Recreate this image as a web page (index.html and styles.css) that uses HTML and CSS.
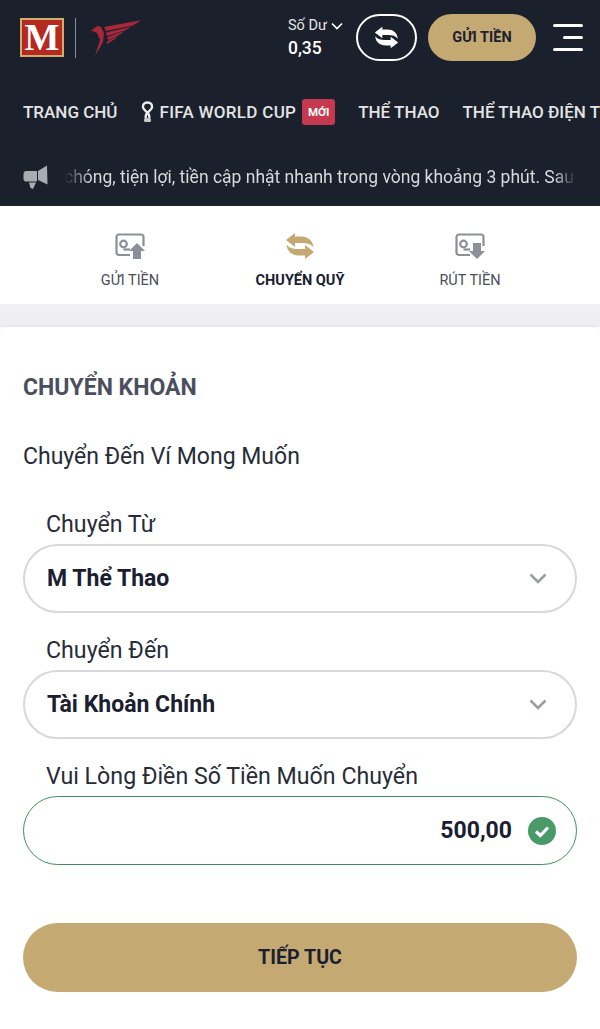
FILE: index.html
```html
<!doctype html>
<html>
<head>
    <meta charset="utf-8">
    <link rel="stylesheet" href="styles.css">
</head>
<body>
<div id="wrapper">
    <header class="header">
        <div class="topbar">
            <div class="logos">
                <div class="logoM"><span>M</span></div>
                <div class="logoLine"></div>
                <svg class="falcon" width="56" height="42" viewBox="0 0 56 42">
                    <path fill="#a8283a" d="M3 13.500 L9.500 9 L13 10 L16 16 L15 25 L7 39 L12 23 L9 16 L6 14.500 Z"/>
                    <path fill="#a8283a" d="M16 10 L53 3.300 L45 8.500 L18 14 Z"/>
                    <path fill="#a8283a" d="M18 15.500 L43 9.800 L38 13 L19 19 Z"/>
                    <path fill="#a8283a" d="M19.500 20 L36 14 L32 17.500 L20 23 Z"/>
                    <path fill="#a8283a" d="M19 24.500 L30 18.500 L27 22 L19 27 Z"/>
                </svg>
            </div>
            <div class="balance">
                <div class="balanceLabel">Số Dư
                    <svg width="12" height="8" viewBox="0 0 12 8"><path d="M1 1.500 L6 6.500 L11 1.500" fill="none" stroke="#fff" stroke-width="1.600"/></svg>
                </div>
                <div class="balanceValue">0,35</div>
            </div>
            <button class="swapBtn">
                <svg width="25" height="23" viewBox="0 0 30 27"><path fill="#fff" d="M1 7.500 L10 0.500 L10 4 L16 4 C23 4 28 8 28.500 15 C26 11.500 22 10.500 17 10.500 L10 10.500 L10 14.500 Z"/><path fill="#fff" transform="rotate(180 15 13.500)" d="M1 7.500 L10 0.500 L10 4 L16 4 C23 4 28 8 28.500 15 C26 11.500 22 10.500 17 10.500 L10 10.500 L10 14.500 Z"/></svg>
            </button>
            <button class="depositBtn">GỬI TIỀN</button>
            <div class="burger"><i class="l1"></i><i class="l2"></i><i class="l3"></i></div>
        </div>
        <nav class="nav">
            <span class="navItem">TRANG CHỦ</span>
            <span class="navItem cup">
                <svg width="13" height="22" viewBox="0 0 13 22"><path fill="none" stroke="#ececec" stroke-width="2.400" d="M6.500 1.500 C10 1.500 11.500 4 11 6.500 C10.500 9 6 11 5 14 L4.500 17 M6.500 1.500 C3 1.500 1.500 4 2 6.500 C2.500 9 7 11 8 14 L8.500 17"/><rect x="3" y="17" width="7" height="4" rx="1.500" fill="#c8c8c8"/></svg>
                <span class="cupText">FIFA WORLD CUP</span>
                <span class="newTag">MỚI</span>
            </span>
            <span class="navItem">THỂ THAO</span>
            <span class="navItem">THỂ THAO ĐIỆN TỬ</span>
        </nav>
        <div class="ticker">
            <svg class="horn" width="25" height="24" viewBox="0 0 25 24"><path fill="#a9acb0" d="M15 6 L24 0.500 L24.500 19.500 L15 15 Z M14 6 L14 16.500 L3 16.500 C1.500 16.500 0.500 15.500 0.500 14 L0.500 9 C0.500 7.500 1.500 6 3 6 Z M6 17.500 L13 17.500 L10 24 L7.500 23 Z"/></svg>
            <div class="tickerText"><span>chóng, tiện lợi, tiền cập nhật nhanh trong vòng khoảng 3 phút. Sau khi</span></div>
        </div>
    </header>

    <div class="tabs">
        <div class="tab">
            <svg width="30" height="28" viewBox="0 0 30 28"><path fill="none" stroke="#8b8f97" stroke-width="2.200" d="M15 23 L4 23 C2.500 23 1.500 22 1.500 20.500 L1.500 5 C1.500 3.500 2.500 2.500 4 2.500 L26 2.500 C27.500 2.500 28.500 3.500 28.500 5 L28.500 14"/><circle cx="8.500" cy="12" r="3.300" fill="none" stroke="#8b8f97" stroke-width="2.200"/><path fill="none" stroke="#8b8f97" stroke-width="2.200" d="M8.500 17.500 L15 17.500"/><path fill="#8b8f97" d="M22 11 L30 19 L26 19 L26 27 L18 27 L18 19 L14 19 Z"/></svg>
            <span>GỬI TIỀN</span>
        </div>
        <div class="tab active">
            <svg width="30" height="27" viewBox="0 0 30 27"><path fill="#c5a973" d="M1 7.500 L10 0.500 L10 4 L16 4 C23 4 28 8 28.500 15 C26 11.500 22 10.500 17 10.500 L10 10.500 L10 14.500 Z"/><path fill="#c5a973" transform="rotate(180 15 13.500)" d="M1 7.500 L10 0.500 L10 4 L16 4 C23 4 28 8 28.500 15 C26 11.500 22 10.500 17 10.500 L10 10.500 L10 14.500 Z"/></svg>
            <span>CHUYỂN QUỸ</span>
        </div>
        <div class="tab">
            <svg width="30" height="28" viewBox="0 0 30 28"><path fill="none" stroke="#8b8f97" stroke-width="2.200" d="M15 23 L4 23 C2.500 23 1.500 22 1.500 20.500 L1.500 5 C1.500 3.500 2.500 2.500 4 2.500 L26 2.500 C27.500 2.500 28.500 3.500 28.500 5 L28.500 14"/><circle cx="8.500" cy="12" r="3.300" fill="none" stroke="#8b8f97" stroke-width="2.200"/><path fill="none" stroke="#8b8f97" stroke-width="2.200" d="M8.500 17.500 L15 17.500"/><path fill="#8b8f97" d="M22 27 L30 19 L26 19 L26 11 L18 11 L18 19 L14 19 Z"/></svg>
            <span>RÚT TIỀN</span>
        </div>
    </div>

    <div class="gap"></div>

    <main class="card">
        <h2 class="title">CHUYỂN KHOẢN</h2>
        <p class="intro">Chuyển Đến Ví Mong Muốn</p>

        <label class="fieldLabel first">Chuyển Từ</label>
        <div class="pill">
            <span class="pillText">M Thể Thao</span>
            <svg width="18" height="11" viewBox="0 0 18 11"><path d="M1.500 1.500 L9 9 L16.500 1.500" fill="none" stroke="#9a9da3" stroke-width="2.600"/></svg>
        </div>

        <label class="fieldLabel">Chuyển Đến</label>
        <div class="pill">
            <span class="pillText">Tài Khoản Chính</span>
            <svg width="18" height="11" viewBox="0 0 18 11"><path d="M1.500 1.500 L9 9 L16.500 1.500" fill="none" stroke="#9a9da3" stroke-width="2.600"/></svg>
        </div>

        <label class="fieldLabel">Vui Lòng Điền Số Tiền Muốn Chuyển</label>
        <div class="pill ok">
            <span class="amount">500,00</span>
            <svg width="28" height="28" viewBox="0 0 28 28"><circle cx="14" cy="14" r="14" fill="#4a9a68"/><path d="M8 14.500 L12.300 18.500 L20 10.500" fill="none" stroke="#fff" stroke-width="3.200"/></svg>
        </div>

        <button class="nextBtn">TIẾP TỤC</button>
    </main>
</div>
</body>
</html>
```

FILE: styles.css
```css
html, body {
    margin: 0;
    height: 100%;
}
body {
    font-family: Roboto, "Noto Sans", sans-serif;
    background: #fff;
    color: #1a2030;
    overflow: hidden;
}
#wrapper {
    width: 600px;
    height: 1029px;
    overflow: hidden;
}
button {
    font-family: inherit;
    border: none;
    padding: 0;
}

.header {
    height: 206px;
    background: #1a202c;
    overflow: hidden;
}
.topbar {
    display: flex;
    align-items: center;
    height: 47px;
    padding: 14px 0 0 20px;
}
.logos {
    display: flex;
    align-items: center;
    width: 268px;
}
.logoM {
    width: 44px;
    height: 39px;
    box-sizing: border-box;
    border: 2px solid #d3ad6e;
    background: #b52a20;
    color: #fff;
    display: flex;
    align-items: center;
    justify-content: center;
    font-family: "Liberation Serif", serif;
    font-weight: bold;
    font-size: 37px;
}
.logoLine {
    width: 1px;
    height: 40px;
    background: #8a8d93;
    margin: 0 12px 0 11px;
}
.balance {
    width: 68px;
    color: #fff;
}
.balanceLabel {
    font-size: 14.500px;
    line-height: 18px;
    color: #e6e6e6;
    display: flex;
    align-items: center;
    gap: 4px;
}
.balanceValue {
    font-size: 17.500px;
    font-weight: 500;
    line-height: 20px;
    margin-top: 3px;
}
.swapBtn {
    width: 61px;
    height: 47px;
    border: 2px solid #fff;
    border-radius: 24px;
    background: transparent;
    display: flex;
    align-items: center;
    justify-content: center;
}
.depositBtn {
    width: 108px;
    height: 47px;
    margin-left: 11px;
    border-radius: 24px;
    background: #c5a973;
    color: #1a2030;
    font-size: 14.500px;
    font-weight: 700;
}
.burger {
    width: 30px;
    height: 27px;
    margin-left: 17px;
    display: flex;
    flex-direction: column;
    justify-content: space-between;
    align-items: flex-end;
}
.burger i {
    display: block;
    height: 3px;
    background: #fff;
    border-radius: 2px;
}
.l1, .l3 {
    width: 30px;
}
.l2 {
    width: 20px;
}

.nav {
    display: flex;
    align-items: center;
    gap: 23px;
    height: 38px;
    margin-top: 32px;
    padding-left: 23px;
    color: #e4e4e4;
    font-size: 17px;
    font-weight: 500;
    white-space: nowrap;
}
.cup {
    display: flex;
    align-items: center;
    gap: 5px;
    margin-left: 1px;
}
.cupText {
    letter-spacing: 0.300px;
}
.newTag {
    background: #c4394f;
    color: #fff;
    font-size: 11.500px;
    font-weight: 700;
    border-radius: 3px;
    width: 33px;
    height: 26px;
    margin-left: 1px;
    display: flex;
    align-items: center;
    justify-content: center;
}

.ticker {
    display: flex;
    align-items: center;
    margin-top: 34px;
    padding-left: 23px;
}
.horn {
    flex: none;
}
.tickerText {
    width: 538px;
    margin-left: 16px;
    overflow: hidden;
    white-space: nowrap;
    font-size: 17.500px;
    line-height: 24px;
    color: #d8d9db;
    -webkit-mask-image: linear-gradient(to right, transparent 0, #000 28px, #000 490px, transparent 512px);
    mask-image: linear-gradient(to right, transparent 0, #000 28px, #000 490px, transparent 512px);
}

.tabs {
    height: 98px;
    display: grid;
    grid-template-columns: 170px 170px 170px;
    justify-content: center;
    background: #fff;
}
.tab {
    display: flex;
    flex-direction: column;
    align-items: center;
    font-size: 14.500px;
    color: #4b4f58;
    padding-top: 26px;
}
.tab svg {
    height: 28px;
}
.tab span {
    margin-top: 12px;
    line-height: 18px;
}
.tab.active {
    color: #1a2030;
    font-weight: 700;
}

.gap {
    height: 23px;
    background: linear-gradient(#f1f1f3, #eeeef0);
}

.card {
    height: 702px;
    box-sizing: border-box;
    background: #fff;
    border-radius: 8px 8px 0 0;
    padding: 47px 23px 0;
    box-shadow: 0 -1px 3px rgba(0, 0, 0, 0.05);
}
.title {
    margin: 0;
    font-size: 23px;
    line-height: 28px;
    font-weight: 700;
    color: #4a4f5e;
}
.intro {
    margin: 41px 0 0;
    font-size: 23px;
    line-height: 28px;
    color: #272c38;
}
.fieldLabel {
    display: block;
    margin: 0 0 6px 23px;
    padding-top: 24px;
    font-size: 23.200px;
    line-height: 27px;
    color: #272c38;
}
.fieldLabel.first {
    padding-top: 0;
    margin-top: 40px;
}
.pill {
    height: 69px;
    box-sizing: border-box;
    border: 2px solid #d8d8da;
    border-radius: 35px;
    display: flex;
    align-items: center;
    justify-content: space-between;
    padding: 0 28px 0 22px;
}
.pillText {
    font-size: 23px;
    font-weight: 700;
    color: #1a2030;
}
.pill.ok {
    border: 1.500px solid #3f8f5e;
    justify-content: flex-end;
    gap: 16px;
    padding-right: 20px;
}
.amount {
    font-size: 23px;
    font-weight: 700;
    color: #1a2030;
}
.nextBtn {
    display: block;
    width: 100%;
    height: 69px;
    margin-top: 58px;
    border-radius: 35px;
    background: #c5a973;
    color: #1a2030;
    font-size: 19.600px;
    font-weight: 700;
}
```
